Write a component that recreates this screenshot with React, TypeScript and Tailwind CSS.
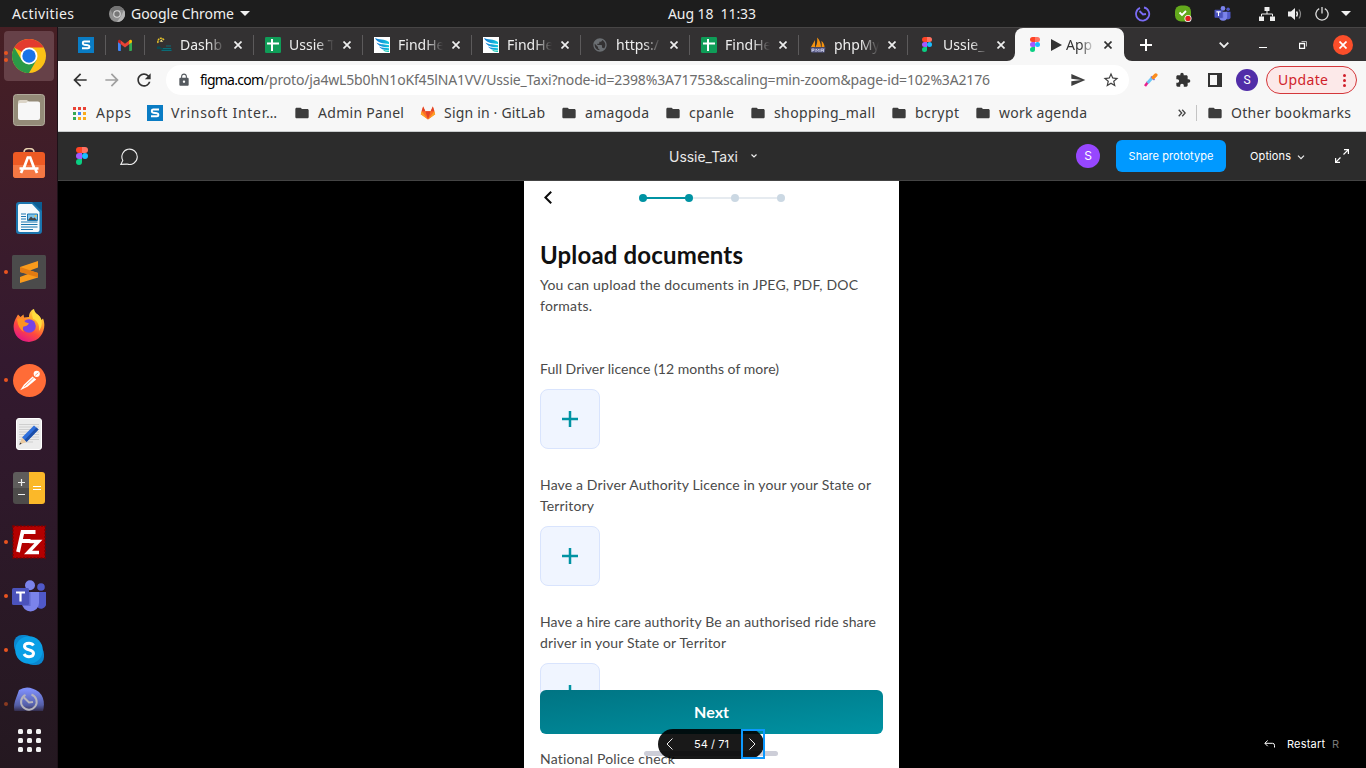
import { useLayoutEffect, useRef, type ReactNode } from "react";
import {
  MdArrowBack,
  MdArrowForward,
  MdRefresh,
  MdLock,
  MdSend,
  MdStarBorder,
  MdExtension,
  MdFolder,
  MdPublic,
} from "react-icons/md";

/* A single line of text whose tracking is adjusted to fill the width of its box. */
function Line({ children, className }: { children: string; className: string }) {
  const box = useRef<HTMLSpanElement>(null);
  const text = useRef<HTMLSpanElement>(null);
  useLayoutEffect(() => {
    const b = box.current;
    const t = text.current;
    if (!b || !t) return;
    t.style.letterSpacing = "0px";
    const gap = (b.clientWidth - t.getBoundingClientRect().width) / (children.length - 1);
    t.style.letterSpacing = `${gap}px`;
  }, [children]);
  return (
    <span ref={box} className={`block shrink-0 whitespace-pre ${className}`}>
      <span ref={text}>{children}</span>
    </span>
  );
}

/* ---------- small logos ---------- */

function FigmaLogo({ className }: { className: string }) {
  return (
    <svg viewBox="0 0 12 18" className={className}>
      <path d="M3 0h3v6H3a3 3 0 0 1 0-6z" fill="#ff4425" />
      <path d="M6 0h3a3 3 0 0 1 0 6H6z" fill="#ff7262" />
      <path d="M3 6h3v6H3a3 3 0 0 1 0-6z" fill="#a259ff" />
      <circle cx="9" cy="9" r="3" fill="#1abcfe" />
      <path d="M3 12h3v3a3 3 0 1 1-3-3z" fill="#0acf83" />
    </svg>
  );
}

function VrinsoftLogo() {
  return (
    <svg viewBox="0 0 16 16" className="size-4 shrink-0">
      <path d="M0 0h16v16H0z" fill="#0a7cc4" />
      <path d="M12 4.6H6.2Q4.9 4.6 4.9 5.6v1q0 1.1 1.3 1.2l3.8.4q1.3.1 1.3 1.2v.9q0 1-1.3 1H4" fill="none" stroke="#fff" strokeWidth="2" />
    </svg>
  );
}

function GmailLogo() {
  return (
    <svg viewBox="0 0 16 12" className="h-3 w-4 shrink-0">
      <path d="M1 2.5h2.8V12H2a1 1 0 0 1-1-1z" fill="#4285f4" />
      <path d="M12.2 2.5H15V11a1 1 0 0 1-1 1h-1.800z" fill="#34a853" />
      <path d="M3.800 1.500 8 4.700l4.200-3.200v3.700L8 8.400 3.800 5.200z" fill="#ea4335" />
      <path d="M1 2.200C1 .7 2.700.2 3.800 1.200v4L1 3.300z" fill="#c5221f" />
      <path d="M15 2.200C15 .7 13.300.2 12.200 1.200v4L15 3.300z" fill="#fbbc04" />
    </svg>
  );
}

function DashLogo() {
  return (
    <svg viewBox="0 0 16 16" className="size-4 shrink-0">
      <path d="M2 6C1 2 5-.5 8 3" fill="none" stroke="#e6c229" strokeWidth="1.500" strokeDasharray="2 .6" />
      <path d="M3.500 4.500 5.500 2.500 7 5z" fill="#f0e08a" />
      <path d="M1 9.500h3l1 1.500h10.500v3H7L5 12H1z" fill="#0a4a52" />
      <path d="M5.500 13.500h10M10 9h5M7 11.500h8" stroke="#0c6b76" />
    </svg>
  );
}

function SheetLogo() {
  return (
    <svg viewBox="0 0 16 16" className="size-4 shrink-0">
      <rect width="16" height="16" rx="1.200" fill="#0f9d58" />
      <path d="M7 2v12M2 6.500h12" stroke="#fff" strokeWidth="2" />
    </svg>
  );
}

function WingLogo() {
  return (
    <svg viewBox="0 0 16 16" className="size-4 shrink-0">
      <defs>
        <linearGradient id="wing" x1="0" x2="1">
          <stop offset="0" stopColor="#1379d8" />
          <stop offset="1" stopColor="#12c8dc" />
        </linearGradient>
      </defs>
      <path d="M0 0h16v16H0z" fill="#fff" />
      <path d="M1 1c3 2 10 .500 14 4v2C10 6.500 3 6 1 1z" fill="url(#wing)" />
      <path d="M2.500 5.500C6 8 11 7 15 8.300v2C10 10.500 4.500 9.500 2.500 5.500z" fill="url(#wing)" />
      <path d="M5 9.500c3 1.600 6.500 1.300 10 1.800v1.600c-4 .6-8-.4-10-3.400z" fill="url(#wing)" />
      <path d="M9 12.800c2 .7 4 .8 6 .8v1.400c-3 .2-5-.5-6-2.200z" fill="#19c9b8" />
    </svg>
  );
}

function PmaLogo() {
  return (
    <svg viewBox="0 0 16 16" className="size-4 shrink-0">
      <path d="M1 10 5 3v7zM5.500 10C7.500 7 7.500 3 7 .5c2.500 2 4 6 4 9.500zM11.500 10c.5-2 .3-4.500-.3-6C13.500 5 14.500 8 14.500 10z" fill="#f29111" />
      <path d="M.500 10.500h15l-1 5H1.500z" fill="#5c5f8d" />
      <path d="M2 15v-3h2v1.500H2M6 15v-3l1.500 1.500L9 12v3M11 15v-3h2.500v3M11 13.500h2.500" fill="none" stroke="#c3c4dd" strokeWidth=".9" />
    </svg>
  );
}

function GitlabLogo() {
  return (
    <svg viewBox="0 0 16 15" className="h-[14px] w-4 shrink-0">
      <path d="M8 14.500 .3 8.900 2.800.6l2.400 5h5.600l2.400-5 2.500 8.300z" fill="#fc6d26" />
      <path d="M8 14.500 5.200 5.600h5.600z" fill="#e24329" />
      <path d="M8 14.500.3 8.900l.8-3.300zM8 14.500l7.700-5.600-.8-3.300z" fill="#fca326" />
      <path d="m2.800.6 2.400 5H1.100zM13.200.6l-2.400 5h4.100z" fill="#e24329" />
    </svg>
  );
}

function TeamsLogo({ className }: { className: string }) {
  return (
    <svg viewBox="0 0 34 32" className={className}>
      <circle cx="29" cy="7" r="3.800" fill="#5059c9" />
      <path d="M24 12h10v10a5 5 0 0 1-10 3z" fill="#5059c9" />
      <circle cx="18" cy="5.200" r="5" fill="#7b83eb" />
      <path d="M10 12h17v11a8.300 8.300 0 0 1-17 0z" fill="#7b83eb" />
      <path d="M10 12h8.500v14H10z" fill="#4b53bc" opacity=".55" />
      <rect y="8" width="17" height="17" rx="1.500" fill="#4b53bc" />
      <path d="M4 12.500h9M8.500 12.500v9" stroke="#fff" strokeWidth="2.200" />
    </svg>
  );
}

/* ---------- top panel ---------- */

function TopPanel() {
  return (
    <header className="flex h-[27px] shrink-0 items-center bg-[#1d1d1d] text-sm text-[#f0f0f0]">
      <Line className="ml-3 w-[62px]">Activities</Line>
      <svg viewBox="0 0 16 16" className="ml-[35px] size-4 shrink-0">
        <circle cx="8" cy="8" r="8" fill="#8f8f8f" />
        <path d="M8 4h7A8 8 0 0 0 1.300 3.800L4.500 9.500z" fill="#747474" />
        <path d="M8 16l4-6 3-6a8 8 0 0 1-7 12z" fill="#b5b5b5" />
        <circle cx="8" cy="8" r="3.800" fill="#d8d8d8" />
        <circle cx="8" cy="8" r="2.700" fill="#777" />
      </svg>
      <Line className="ml-[6px] w-[103px]">Google Chrome</Line>
      <svg viewBox="0 0 10 5" className="ml-[6px] h-[5px] w-[10px] shrink-0">
        <path d="M0 0h10L5 5z" fill="#f0f0f0" />
      </svg>
      <Line className="ml-[418px] w-[88px]">Aug 18  11:33</Line>
      <svg viewBox="0 0 16 16" className="ml-[379px] size-4 shrink-0" fill="none" stroke="#7a6cf5" strokeWidth="1.800">
        <path d="M5 1.900a6.600 6.600 0 1 0 4-.4M4.500 5 8 8.500 11 8" />
      </svg>
      <svg viewBox="0 0 18 18" className="ml-[23px] size-[18px] shrink-0">
        <rect x="1" y=".5" width="16" height="16" rx="6" fill="#63a81c" />
        <path d="m5.500 7.500 2.500 2.500 4-4" fill="none" stroke="#fff" strokeWidth="1.800" />
        <circle cx="14" cy="13.500" r="3.500" fill="#fff" />
        <circle cx="14" cy="13.500" r="2.700" fill="#e01f1f" />
      </svg>
      <TeamsLogo className="ml-[22px] h-[15px] w-[17px] shrink-0" />
      <svg viewBox="0 0 16 14" className="ml-7 h-[14px] w-4 shrink-0" fill="#eee">
        <path d="M5.500 0h5v4h-5zM0 9.500h5V14H0zM11 9.500h5V14h-5z" />
        <path d="M8 4v3M2.500 9.500V7h11v2.500" fill="none" stroke="#eee" />
      </svg>
      <svg viewBox="0 0 16 14" className="ml-3 h-[14px] w-4 shrink-0">
        <path d="M1 4.500h3L8 1v12L4 9.500H1z" fill="#eee" />
        <path d="M9.500 4.500q1.800 2.500 0 5" fill="none" stroke="#eee" strokeWidth="1.400" />
        <path d="M12 2.500q3 4.500 0 9" fill="none" stroke="#888" strokeWidth="1.200" />
      </svg>
      <svg viewBox="0 0 14 14" className="ml-3 size-[14px] shrink-0" fill="none" stroke="#ddd" strokeWidth="1.300">
        <path d="M4.200 1.600a6.100 6.100 0 1 0 5.600 0M7 0v6.500" />
      </svg>
      <svg viewBox="0 0 10 5" className="ml-3 h-[5px] w-[10px] shrink-0">
        <path d="M0 0h10L5 5z" fill="#f0f0f0" />
      </svg>
    </header>
  );
}

/* ---------- dock ---------- */

function DockItem({ dots = 0, children }: { dots?: number; children: ReactNode }) {
  return (
    <div className="relative flex h-[54px] w-[58px] shrink-0 items-center justify-center">
      <div className="absolute top-0 left-1 flex h-full flex-col items-center justify-center gap-[3px]">
        {Array.from({ length: dots }, (_, i) => (
          <span key={i} className="size-[4px] rounded-full bg-[#e95420]" />
        ))}
      </div>
      {children}
    </div>
  );
}

function Dock() {
  return (
    <nav className="flex w-[58px] shrink-0 flex-col overflow-hidden border-r border-[#1d1118] bg-linear-to-b from-[#471f24] via-[#33192f] via-45% to-[#241820] pt-[2px]">
      <DockItem dots={2}>
        <div className="flex size-[50px] items-center justify-center rounded bg-[#664148]">
          <svg viewBox="0 0 34 34" className="size-[34px]">
            <circle cx="17" cy="17" r="17" fill="#fbc116" />
            <path d="M17 17 2.300 8.500A17 17 0 0 1 31.700 8.500H17z" fill="#e33b2e" />
            <path d="M2.300 8.500A17 17 0 0 0 17 34l7.400-12.800L17 17 9.700 21.300z" fill="#2b9a47" />
            <circle cx="17" cy="17" r="8.500" fill="#fff" />
            <circle cx="17" cy="17" r="6.700" fill="#1a73e8" />
          </svg>
        </div>
      </DockItem>
      <DockItem>
        <svg viewBox="0 0 32 32" className="size-8">
          <rect x=".5" y=".5" width="31" height="31" rx="3" fill="#948b78" stroke="#b0aa9b" />
          <path d="M5 8q0-2 2-2h7l2 2h9q2 0 2 2v4H5z" fill="#dcd5c8" />
          <path d="M5 11q0-2 2-2h6l2-1.500h10q2 0 2 2V24q0 2-2 2H7q-2 0-2-2z" fill="#f7f7f7" />
        </svg>
      </DockItem>
      <DockItem>
        <svg viewBox="0 2 32 32" className="size-8">
          <path d="M11 6.500q0-4 5-4t5 4" fill="none" stroke="#e8d2b0" strokeWidth="1.500" />
          <rect y="6" width="32" height="26" rx="3" fill="#ee5a24" />
          <path d="M0 19h32v10q0 3-3 3H3q-3 0-3-3z" fill="#f57844" />
          <path d="M10.500 23 14.800 11.500h2.400L21.500 23M6.500 22.500h19M9.500 23.500 8 27M22.500 23.500 24 27" fill="none" stroke="#fff" strokeWidth="2.700" />
        </svg>
      </DockItem>
      <DockItem>
        <svg viewBox="0 0 26 32" className="h-8 w-[26px]">
          <path d="M3 0h15l8 8v21q0 3-3 3H3q-3 0-3-3V3q0-3 3-3z" fill="#1b76af" />
          <path d="M4 2h12l7.500 8v18q0 2-2 2H4q-2 0-2-2V4q0-2 2-2z" fill="#f5fafc" />
          <path d="M16 0h10v9z" fill="#0b5d92" />
          <path d="M5 12h5M5 14.500h5M5 17h5M5 20h16.500M5 22.500h16.500M5 25h16.500M5 27.500h12" stroke="#1b76af" strokeWidth="1.200" />
          <path d="M11.500 12h10v6.500h-10z" fill="#7cc3ea" stroke="#1b76af" />
          <path d="m12 18 3-3.500 2 2 1.500-1 2.500 2.500z" fill="#444" />
          <circle cx="19.500" cy="14" r="1" fill="#f5c542" />
        </svg>
      </DockItem>
      <DockItem dots={1}>
        <svg viewBox="0 0 34 34" className="size-[34px]">
          <rect width="34" height="34" rx="1.500" fill="#4b4b4b" />
          <path d="M8 12 26 6v6.500l-8 3 8 2.500v4.500L8 28v-6l8-3-8-2z" fill="#f99b1c" />
          <path d="m8 12 18 6v4.500L8 17z" fill="#e27b12" />
        </svg>
      </DockItem>
      <DockItem>
        <svg viewBox="0 0 32 33" className="mb-[2px] h-[33px] w-8">
          <defs>
            <linearGradient id="fox" x1=".85" y1="0" x2=".3" y2="1">
              <stop offset="0" stopColor="#fff44f" />
              <stop offset=".35" stopColor="#ffa32b" />
              <stop offset=".65" stopColor="#ff4a3d" />
              <stop offset="1" stopColor="#e21587" />
            </linearGradient>
          </defs>
          <path d="M2.500 10 5 5.500 7.500 8l3-2.500.5 3 5-.5C16 4 18 1 21 0c0 4 4 5 6 8l1.500 3L30 9.500c4 9-1 23-14 23.500C4 33 -3 21 2.500 10z" fill="url(#fox)" />
          <circle cx="16" cy="17" r="6.800" fill="#7543e5" />
          <path d="M4 10q6-3 8 3l4 1.500q-2 3-5.500 3Q9 20 11 23q-6-3-7-13z" fill="#ff9422" />
          <path d="M21 0c0 4 4 5 6 8 3 5 2 10-1 14 1-6-2-11-6-12q-2-6 1-10z" fill="#ffdc3e" />
        </svg>
      </DockItem>
      <DockItem dots={1}>
        <svg viewBox="0 0 32 32" className="size-[33px]">
          <circle cx="16" cy="16" r="16" fill="#ff6c37" />
          <circle cx="23" cy="9.500" r="3" fill="#fff" />
          <path d="m7 25.500 3.500-5.500 8.500-8 3.500 3-8.500 7z" fill="#fff" />
          <path d="m11 22 9-8.500M21.500 11l3-2.500" stroke="#ff6c37" strokeWidth=".7" />
        </svg>
      </DockItem>
      <DockItem>
        <svg viewBox="0 0 26 32" className="h-8 w-[26px]">
          <rect x=".5" y=".5" width="25" height="31" rx="2.500" fill="#ececec" stroke="#fff" />
          <path d="M3 6.500h20M3 9h20M3 11.500h20M3 14h20M3 16.500h20M3 19h20M3 21.500h20M3 24h14" stroke="#c8c8c8" strokeWidth=".8" />
          <path d="m6 19.500 12-12 4.500 4L10.500 24z" fill="#2f6fdb" />
          <path d="m8.500 22 12-12.500 2 2L10.500 24z" fill="#1c4ea8" />
          <path d="m6 19.500 4.500 4.500L3.500 26.500z" fill="#e9c9a0" />
          <path d="m4.200 24.500 1.500 1.300-2.500 1z" fill="#333" />
        </svg>
      </DockItem>
      <DockItem>
        <svg viewBox="0 0 32 32" className="size-8">
          <path d="M3 0h13v16H0V3q0-3 3-3z" fill="#5e5c5b" />
          <path d="M0 16h16v16H3q-3 0-3-3z" fill="#4d4b4a" />
          <path d="M16 0h13q3 0 3 3v26q0 3-3 3H16z" fill="#fbb829" />
          <path d="M5 10.500h7M8.500 7v7M5 22.500h7" stroke="#eee" strokeWidth="1.200" />
          <path d="M20 14.500h8M20 17.500h8" stroke="#fff" />
        </svg>
      </DockItem>
      <DockItem dots={1}>
        <svg viewBox="0 0 34 34" className="size-[34px]">
          <rect x="1" y="1" width="32" height="32" fill="#b30000" stroke="#7c0000" strokeWidth="1.500" strokeDasharray="2 1.500" />
          <path d="m6 27 4.500-20h13M8.500 16h10" fill="none" stroke="#fff" strokeWidth="3.800" />
          <path d="M17.500 16.500h9L16 27.500h11" fill="none" stroke="#fff" strokeWidth="3.400" />
        </svg>
      </DockItem>
      <DockItem dots={1}>
        <TeamsLogo className="h-8 w-[34px]" />
      </DockItem>
      <DockItem dots={1}>
        <svg viewBox="0 0 30 30" className="size-[30px]">
          <rect width="19" height="19" rx="8" fill="#0a86cf" />
          <rect x="11" y="11" width="19" height="19" rx="8" fill="#0a86cf" />
          <circle cx="15" cy="15" r="13.800" fill="#0a9fe6" />
          <path d="M19.500 10.500Q18 8.300 15 8.300c-2.700 0-4.500 1-4.500 3 0 4.700 9 2.500 9 7 0 2.200-2 3.400-4.500 3.400q-3.500 0-5-2.700" fill="none" stroke="#fff" strokeWidth="3" />
        </svg>
      </DockItem>
      <div className="relative flex h-[34px] shrink-0 items-start justify-center overflow-hidden pt-[10px]">
        <span className="absolute top-[25px] left-1 size-[4px] rounded-full bg-[#8a3a20]" />
        <svg viewBox="0 0 30 30" className="size-[30px] shrink-0">
          <defs>
            <linearGradient id="clk" x2="0" y2="1">
              <stop offset=".1" stopColor="#7c8cf5" />
              <stop offset=".6" stopColor="#555fa8" />
              <stop offset=".85" stopColor="#2b2035" />
            </linearGradient>
          </defs>
          <path d="M5 3Q14-3 25 5q7 7 4 19l-3 6H4Q-2 24 1 14z" fill="url(#clk)" />
          <path d="M11.500 7.800a7.800 7.800 0 1 0 6-.3M10 10.500l5 5 4-.5" fill="none" stroke="#b5b4bd" strokeWidth="2" />
        </svg>
      </div>
      <div className="mt-[18px] ml-px grid grid-cols-3 gap-[4px] self-center">
        {Array.from({ length: 9 }, (_, i) => (
          <span key={i} className="size-[5px] rounded-[1.500px] bg-[#f2f2f2]" />
        ))}
      </div>
    </nav>
  );
}

/* ---------- browser chrome ---------- */

function CloseX({ className }: { className: string }) {
  return (
    <svg viewBox="0 0 8 8" className={`size-2 shrink-0 ${className}`} fill="none" stroke="currentColor" strokeWidth="1.700">
      <path d="m.5.5 7 7M7.500.5l-7 7" />
    </svg>
  );
}

function Tab({ icon, title, last = false }: { icon: ReactNode; title: string; last?: boolean }) {
  return (
    <div className={last ? "flex w-[107px] shrink-0 items-center" : "flex w-[109px] shrink-0 items-center"}>
      <div className="ml-[11px] flex w-4 shrink-0 justify-center">{icon}</div>
      <div className="ml-2 w-[46px] mask-r-from-60% mask-r-to-98% text-sm whitespace-nowrap text-[#eee]">{title}</div>
      <CloseX className="ml-[8px] text-[#eee]" />
      {!last && <span className="ml-auto h-5 w-px bg-[#5c5a5b]" />}
    </div>
  );
}

function TabStrip() {
  return (
    <div className="flex h-[34px] shrink-0 items-center border-t border-[#474545] bg-[#333132]">
      <div className="ml-5"><VrinsoftLogo /></div>
      <span className="ml-[11px] h-5 w-px bg-[#5c5a5b]" />
      <div className="ml-[11px]"><GmailLogo /></div>
      <span className="ml-[11px] h-5 w-px bg-[#5c5a5b]" />
      <Tab icon={<DashLogo />} title="Dashb" />
      <Tab icon={<SheetLogo />} title="Ussie T" />
      <Tab icon={<WingLogo />} title="FindHe" />
      <Tab icon={<WingLogo />} title="FindHe" />
      <Tab icon={<MdPublic className="size-4 text-[#6a6e72]" />} title="https:/" />
      <Tab icon={<SheetLogo />} title="FindHe" />
      <Tab icon={<PmaLogo />} title="phpMy" />
      <Tab icon={<FigmaLogo className="h-[15px] w-[10px]" />} title="Ussie_" last />
      <div className="relative flex h-full w-[109px] shrink-0 items-center rounded-t-lg bg-[#f7f7f7]">
        <svg viewBox="0 0 8 8" className="absolute bottom-0 -left-2 size-2"><path d="M8 0v8H0a8 8 0 0 0 8-8z" fill="#f7f7f7" /></svg>
        <svg viewBox="0 0 8 8" className="absolute -right-2 bottom-0 size-2"><path d="M0 0v8h8a8 8 0 0 1-8-8z" fill="#f7f7f7" /></svg>
        <FigmaLogo className="ml-[15px] h-[15px] w-[10px] shrink-0" />
        <svg viewBox="0 0 11 12" className="ml-[11px] h-3 w-[11px] shrink-0"><path d="m0 0 11 6-11 6z" fill="#333" /></svg>
        <div className="ml-[4px] w-[29px] mask-r-from-50% mask-r-to-100% text-sm whitespace-nowrap text-[#333]">App</div>
        <CloseX className="ml-[9px] text-[#333]" />
      </div>
      <svg viewBox="0 0 12 12" className="ml-4 size-3 shrink-0"><path d="M6 0v12M0 6h12" stroke="#fff" strokeWidth="2" /></svg>
      <svg viewBox="0 0 10 6" className="ml-[67px] h-[6px] w-[10px] shrink-0"><path d="m.7.700 4.300 4.300L9.300.7" fill="none" stroke="#eee" strokeWidth="1.800" /></svg>
      <span className="mt-[5px] ml-[30px] h-px w-2 bg-white" />
      <svg viewBox="0 0 8 8" className="ml-[32px] size-2 shrink-0" fill="none" stroke="#fff"><path d="M.5 2.500h5v5h-5z" strokeWidth="1.300" /><path d="M2.500.5h5v5" stroke="#bbb" /></svg>
      <span className="ml-[26px] flex size-5 shrink-0 items-center justify-center rounded-full bg-[#fb4e2a] text-white"><CloseX className="" /></span>
    </div>
  );
}

function AddressBar() {
  return (
    <div className="flex h-[38px] shrink-0 items-center bg-[#f7f7f7]">
      <MdArrowBack className="ml-[12px] size-5 shrink-0 text-[#333]" />
      <MdArrowForward className="ml-3 size-5 shrink-0 text-[#a0a0a0]" />
      <MdRefresh className="ml-3 size-5 shrink-0 text-[#333]" />
      <div className="ml-3 flex h-[30px] w-[963px] shrink-0 items-center rounded-full bg-white text-sm">
        <MdLock className="ml-[11px] size-[14px] shrink-0 text-[#555a5f]" />
        <Line className="ml-[9px] w-[64px] text-black">figma.com</Line>
        <Line className="w-[726px] text-[#6c6c6c]">/proto/ja4wL5b0hN1oKf45lNA1VV/Ussie_Taxi?node-id=2398%3A71753&scaling=min-zoom&page-id=102%3A2176</Line>
        <MdSend className="ml-[80px] size-4 shrink-0 text-[#404040]" />
        <MdStarBorder className="ml-[16px] size-[18px] shrink-0 text-[#404040]" />
      </div>
      <svg viewBox="0 0 14 14" className="ml-[15px] size-[14px] shrink-0">
        <path d="m1 13 3-4" stroke="#e91e8c" strokeWidth="2.500" />
        <path d="m3.500 10 5-5.500" stroke="#6cc7f5" strokeWidth="3" />
        <path d="m7 3.500 3.500 3.500" stroke="#7a5cf0" strokeWidth="1.500" />
        <path d="m9.300 4.500 2.500-2.500" stroke="#fb8c1d" strokeWidth="3.500" strokeLinecap="round" />
      </svg>
      <MdExtension className="ml-[17px] size-4 shrink-0 text-[#333]" />
      <svg viewBox="0 0 14 14" className="ml-[17px] size-[14px] shrink-0"><path d="M1 1h12v12H1z" fill="none" stroke="#333" strokeWidth="2" /><path d="M9 0h5v14H9z" fill="#333" /></svg>
      <span className="ml-[14px] flex size-[22px] shrink-0 items-center justify-center rounded-full bg-[#512da8] font-[Roboto] text-[12px] text-white">S</span>
      <div className="ml-2 flex h-7 w-[91px] shrink-0 items-center rounded-full border border-[#d4373b] bg-[#fce9e9] text-sm text-[#d01f2b]">
        <Line className="ml-[11px] w-[50px]">Update</Line>
        <div className="ml-[15px] flex flex-col gap-[2px]">
          <span className="size-[3px] rounded-full bg-[#d01f2b]" />
          <span className="size-[3px] rounded-full bg-[#d01f2b]" />
          <span className="size-[3px] rounded-full bg-[#d01f2b]" />
        </div>
      </div>
    </div>
  );
}

function Folder({ width, children }: { width: string; children: string }) {
  return (
    <div className="flex items-center">
      <MdFolder className="-mx-px size-4 shrink-0 text-[#3c3c3c]" />
      <Line className={`ml-[9px] ${width}`}>{children}</Line>
    </div>
  );
}

function Bookmarks() {
  return (
    <div className="flex h-[33px] shrink-0 items-center border-b border-[#c9cccd] bg-[#f7f7f7] pb-1 text-sm text-[#3c3c3c]">
      <svg viewBox="0 0 13 13" className="ml-[15px] size-[13px] shrink-0">
        <path d="M0 0h3v3H0zM5 0h3v3H5zM10 0h3v3h-3z" fill="#ea4335" />
        <path d="M0 5h3v3H0z" fill="#34a853" />
        <path d="M5 5h3v3H5z" fill="#4285f4" />
        <path d="M10 5h3v3h-3zM5 10h3v3H5zM10 10h3v3h-3z" fill="#f9ab1d" />
        <path d="M0 10h3v3H0z" fill="#34a853" />
      </svg>
      <Line className="ml-[10px] w-[35px]">Apps</Line>
      <div className="ml-4"><VrinsoftLogo /></div>
      <Line className="ml-2 w-[106px]">Vrinsoft Inter…</Line>
      <div className="ml-[18px]"><Folder width="w-[86px]">Admin Panel</Folder></div>
      <div className="ml-4"><GitlabLogo /></div>
      <Line className="ml-2 w-[101px]">Sign in · GitLab</Line>
      <div className="ml-[17px] flex gap-[17px]">
        <Folder width="w-[64px]">amagoda</Folder>
        <Folder width="w-[45px]">cpanle</Folder>
        <Folder width="w-[101px]">shopping_mall</Folder>
        <Folder width="w-[44px]">bcrypt</Folder>
        <Folder width="w-[88px]">work agenda</Folder>
      </div>
      <svg viewBox="0 0 8 8" className="ml-[91px] size-2 shrink-0" fill="none" stroke="#444" strokeWidth="1.300"><path d="m.7.700 3 3.300-3 3.300M4.200.7l3 3.300-3 3.300" /></svg>
      <span className="ml-[10px] h-4 w-px bg-[#c4c4c4]" />
      <div className="ml-[11px]"><Folder width="w-[120px]">Other bookmarks</Folder></div>
    </div>
  );
}

/* ---------- prototype viewer ---------- */

function FigmaBar() {
  return (
    <div className="flex h-[49px] shrink-0 items-center border-b border-[#444] bg-[#2c2c2c] font-[Inter] text-[11px] text-white">
      <FigmaLogo className="ml-[18px] h-[18px] w-3 shrink-0" />
      <svg viewBox="0 0 18 17" className="ml-[32px] h-[17px] w-[18px] shrink-0" fill="none" stroke="#eee" strokeWidth="1.100">
        <path d="M.9 16.300 2.800 12.500A7.700 7.700 0 1 1 7 16.100z" />
      </svg>
      <Line className="ml-[531px] w-[69px] text-[14px] text-[#e8e8e8]">Ussie_Taxi</Line>
      <svg viewBox="0 0 6 4" className="ml-[13px] h-1 w-[6px] shrink-0"><path d="m.5.500 2.500 2.500L5.500.5" fill="none" stroke="#eee" strokeWidth="1.200" /></svg>
      <span className="ml-[319px] flex size-6 shrink-0 items-center justify-center rounded-full bg-[#9747ff] text-[12px]">S</span>
      <div className="ml-4 flex h-8 w-[110px] shrink-0 items-center justify-center rounded-md bg-[#0099ff]">
        <Line className="w-[85px]">Share prototype</Line>
      </div>
      <Line className="ml-6 w-[41px]">Options</Line>
      <svg viewBox="0 0 8 5" className="mt-[3px] ml-[6px] h-[5px] w-2 shrink-0"><path d="m1 .7 3 3 3-3" fill="none" stroke="#eee" strokeWidth="1.200" /></svg>
      <svg viewBox="0 0 14 14" className="ml-[30px] size-[14px] shrink-0" fill="none" stroke="#fff" strokeWidth="1.200">
        <path d="M9 .6h4.400V5M13.400.6 8.500 5.500M5 13.400H.6V9M.6 13.400l4.900-4.900" />
      </svg>
    </div>
  );
}

function UploadBox() {
  return (
    <div className="mt-[10px] flex size-[60px] items-center justify-center rounded-lg border border-[#d9e4fd] bg-[#f0f5ff]">
      <svg viewBox="0 0 16 16" className="size-4"><path d="M8 0v16M0 8h16" stroke="#0093a3" strokeWidth="2.500" /></svg>
    </div>
  );
}

function Stepper() {
  return (
    <div className="ml-[87px] flex items-center">
      <span className="size-2 rounded-full bg-[#0093a3]" />
      <span className="-mx-px h-[2px] w-10 bg-[#0093a3]" />
      <span className="size-2 rounded-full bg-[#0093a3]" />
      <span className="-mr-px h-[2px] w-[39px] bg-[#e6ebf0]" />
      <span className="size-2 rounded-full bg-[#cbd8e3]" />
      <span className="-mr-px h-[2px] w-[39px] bg-[#e6ebf0]" />
      <span className="size-2 rounded-full bg-[#cbd8e3]" />
    </div>
  );
}

function Phone() {
  return (
    <div className="relative h-full w-[375px] overflow-hidden bg-white px-4 font-[Lato] text-[14px] leading-[21px] text-[#4a4a4a]">
      <div className="flex h-[34px] items-center">
        <svg viewBox="0 0 8 13" className="mb-px ml-1 h-[13px] w-2"><path d="M7.200.7 1.400 6.500l5.800 5.800" fill="none" stroke="#0b0b0b" strokeWidth="2" /></svg>
        <Stepper />
      </div>
      <Line className="mt-[24px] h-8 w-[203px] text-[24px] leading-8 font-bold text-[#101010]">Upload documents</Line>
      <div className="mt-[3px]">
        <Line className="w-[318px]">You can upload the documents in JPEG, PDF, DOC</Line>
        <Line className="w-[52px]">formats.</Line>
      </div>
      <div className="mt-[42px]">
        <Line className="w-[239px]">Full Driver licence (12 months of more)</Line>
        <UploadBox />
      </div>
      <div className="mt-[25px]">
        <Line className="w-[331px]">Have a Driver Authority Licence in your your State or</Line>
        <Line className="w-[54px]">Territory</Line>
        <UploadBox />
      </div>
      <div className="mt-[25px]">
        <Line className="w-[336px]">Have a hire care authority Be an authorised ride share</Line>
        <Line className="w-[186px]">driver in your State or Territor</Line>
        <UploadBox />
      </div>
      <div className="mt-[25px]">
        <Line className="w-[135px]">National Police check</Line>
      </div>
      <div className="absolute top-[509px] left-4 flex h-11 w-[343px] items-center justify-center rounded-md bg-linear-to-br from-[#007483] to-[#0093a3] pb-px text-[16px] font-bold text-white">
        <Line className="w-[35px]">Next</Line>
      </div>
      <span className="absolute top-[570px] left-[120px] h-[5px] w-[134px] rounded-full bg-[#cdced8]" />
      <div className="absolute top-[548px] left-[134px] flex h-[30px] w-[106px] items-center rounded-full bg-black/90 font-[Inter] text-[11px] text-white">
        <svg viewBox="0 0 7 12" className="ml-[8px] h-3 w-[7px]"><path d="M6.500.5 1 6l5.500 5.500" fill="none" stroke="#eee" /></svg>
        <Line className="ml-[21px] w-[35px]">54 / 71</Line>
        <svg viewBox="0 0 7 12" className="ml-5 h-3 w-[7px]"><path d="M.5.500 6 6 .5 11.500" fill="none" stroke="#eee" /></svg>
      </div>
      <span className="absolute top-[548px] left-[217px] h-[30px] w-6 border-2 border-[#0d99ff]" />
    </div>
  );
}

export default function App() {
  return (
    <div className="flex h-[768px] w-[1366px] flex-col overflow-hidden bg-black font-['Noto_Sans',sans-serif]">
      <TopPanel />
      <div className="flex min-h-0 flex-1">
        <Dock />
        <main className="flex w-[1308px] flex-col">
          <TabStrip />
          <AddressBar />
          <Bookmarks />
          <FigmaBar />
          <div className="relative flex min-h-0 flex-1 pl-[466px]">
            <Phone />
            <div className="mt-auto mb-[17px] ml-[365px] flex items-center font-[Inter] text-[11px] leading-[14px] text-white">
              <svg viewBox="0 0 11 8" className="h-2 w-[11px]" fill="none" stroke="#fff"><path d="M3.700.500.800 3.300l2.900 2.900M1 3.300h7.500q2 0 2 2V7.500" /></svg>
              <Line className="ml-3 w-[38px]">Restart</Line>
              <span className="ml-[7px] text-[#777]">R</span>
            </div>
          </div>
        </main>
      </div>
    </div>
  );
}
